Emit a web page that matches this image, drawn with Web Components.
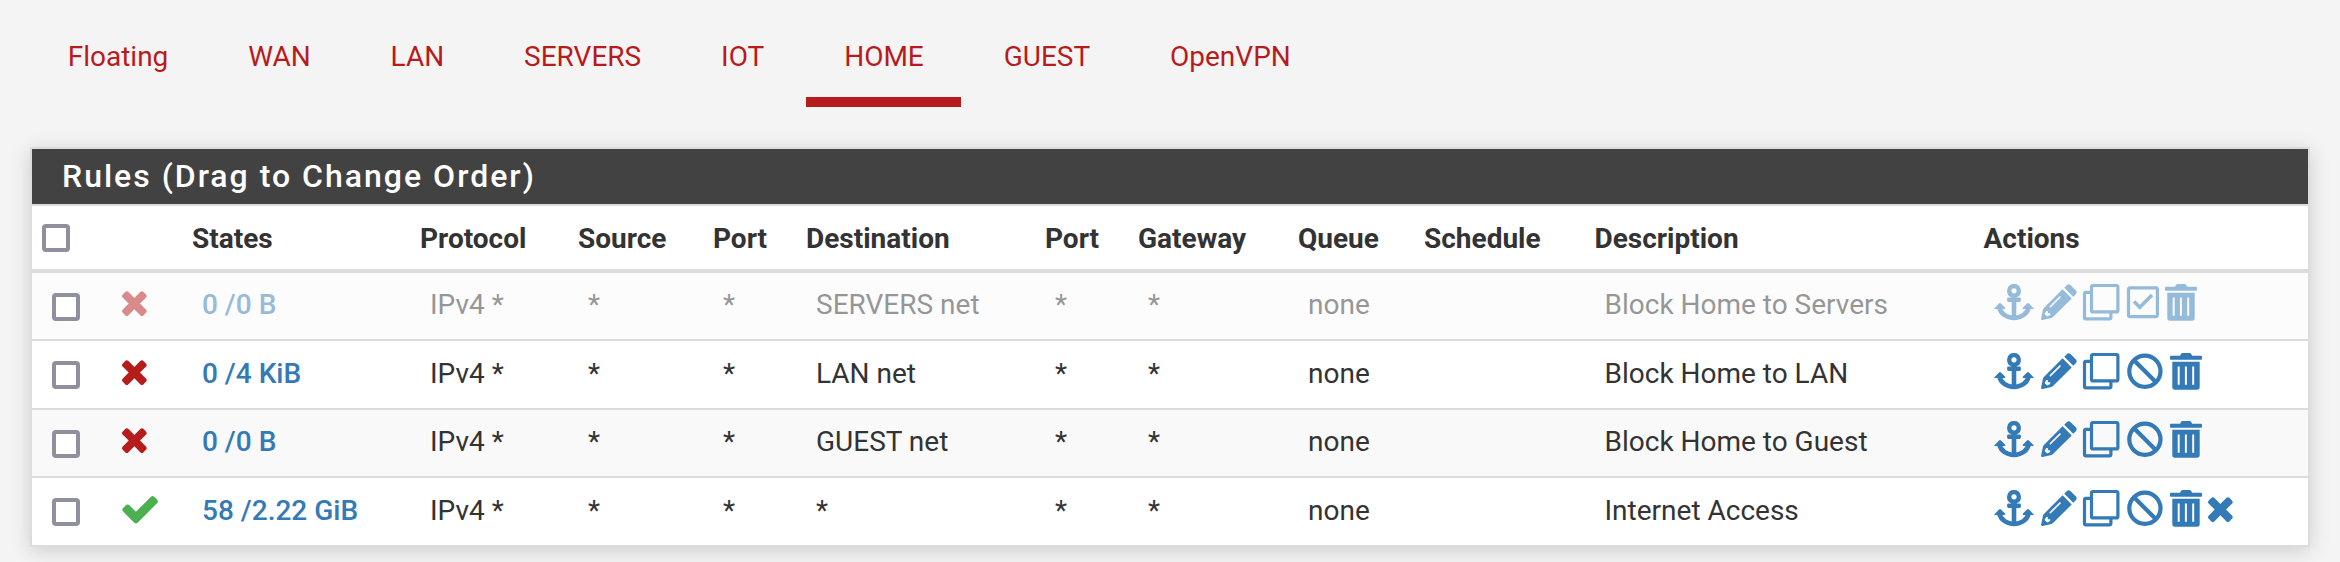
<!DOCTYPE html>
<html lang="en">
<head>
<meta charset="utf-8">
<title>Firewall: Rules: HOME</title>
<style>
  body {
    margin: 0;
    height: 562px;
    overflow: hidden;
    background: #f4f4f4;
    color: #333;
    font: 28px/42px Roboto, "Liberation Sans", sans-serif;
  }
</style>
</head>
<body>
<firewall-rules></firewall-rules>

<script>
const ICONS = {
  anchor: {
    width: 47.3,
    body: `<path fill-rule="evenodd" d="M20 0a6.9 6.9 0 0 1 2.3 13.4H25.5q1.4 0 1.4 1.4v1.7q0 1.4-1.4 1.4H22.3V34h-4.6V17.9H14.5q-1.4 0-1.4-1.4v-1.7q0-1.4 1.4-1.4H17.7A6.9 6.9 0 0 1 20 0zM20 4.2a2.6 2.6 0 1 0 0 5.2a2.6 2.6 0 0 0 0-5.2z"/>
      <path d="M5.2 23C8 37.6 32 37.6 34.8 23" fill="none" stroke="currentColor" stroke-width="4.6"/>
      <path d="M.5 24.2L5 19.4q1-.9 2 0l4 4q1 1.3-.5 1.5H1q-1.4 0-.5-.7zM39.5 24.2L35 19.4q-1-.9-2 0l-4 4q-1 1.3.5 1.5H39q1.4 0 .5-.7z"/>`,
  },
  pencil: {
    width: 42.7,
    body: `<path d="M23.3 3.8L26 1q1.6-1.5 3.4 0l5.6 5.6q1.6 1.7 0 3.4l-2.7 2.7z"/>
      <path fill-rule="evenodd" d="M21.6 5.3l9.1 9.1L12 33.1q-.7.7-1.6.9L1.6 36Q-.1 36.2.1 34.5L2 25.6q.2-.9.9-1.6zM18.6 12.2l-10 10q-.5 1.3 1 1.2l10.1-10q.4-1.5-1.1-1.2zM5.2 26.9l-1.6 3 2.6 2.7 3-1.5v-1.8H6.8v-2.4z"/>`,
  },
  clone: {
    width: 43.4,
    body: `<g fill="none" stroke="currentColor" stroke-width="3.2" stroke-linejoin="round">
      <rect x="8.5" y="1.5" width="26.4" height="26.4" rx="1.5"/>
      <path d="M7.5 8.3H3Q1.5 8.3 1.5 9.8V33.2Q1.5 34.8 3 34.8H26.3Q27.9 34.8 27.9 33.2V28.5"/></g>`,
  },
  ban: {
    width: 42.9,
    body: `<g fill="none" stroke="currentColor" stroke-width="4.2"><circle cx="17.9" cy="18.3" r="15.6"/><path d="M7 7.3l21.8 21.8"/></g>`,
  },
  enable: {
    width: 38.3,
    body: `<rect x="1.5" y="3.9" width="28.9" height="28.7" rx="1.8" fill="none" stroke="currentColor" stroke-width="3.2"/>
      <path d="M7 17.6l5.8 5.6L25 11" fill="none" stroke="currentColor" stroke-width="3.5"/>`,
  },
  trash: {
    width: 38.7,
    body: `<path d="M1 2.8H10L11 1q.6-1 1.8-1h6.6q1.2 0 1.8 1l1 1.8H31q1 0 1 1V5.7q0 1-1 1H1q-1 0-1-1V3.8q0-1 1-1z"/>
      <path fill-rule="evenodd" d="M2.3 8.8H29.7V34q0 2.7-2.7 2.7H5Q2.3 36.7 2.3 34zM7.7 13.6V31.8h2V13.6zM14.9 13.6V31.8h2V13.6zM22.2 13.6V31.8h2V13.6z"/>`,
  },
  times: {
    width: 25,
    body: `<path transform="translate(-6.3 -6.4) scale(.0208333)" d="M1490 1322q0 40-28 68l-136 136q-28 28-68 28t-68-28l-294-294-294 294q-28 28-68 28t-68-28l-136-136q-28-28-28-68t28-68l294-294-294-294q-28-28-28-68t28-68l136-136q28-28 68-28t68 28l294 294 294-294q28-28 68-28t68 28l136 136q28 28 28 68t-28 68l-294 294 294 294q28 28 28 68z"/>`,
  },
  check: {
    width: 36,
    body: `<path transform="translate(-2.5 -6.6) scale(.0230)" d="M1671 566q0 40-28 68l-724 724-136 136q-28 28-68 28t-68-28l-136-136-362-362q-28-28-28-68t28-68l136-136q28-28 68-28t68 28l294 295 656-657q28-28 68-28t68 28l136 136q28 28 28 68z"/>`,
  },
};

const RULES = [
  { disabled: true, state: 'times', states: '0 /0 B', destination: 'SERVERS net', description: 'Block Home to Servers', actions: 'anchor pencil clone enable trash' },
  { state: 'times', states: '0 /4 KiB', destination: 'LAN net', description: 'Block Home to LAN', actions: 'anchor pencil clone ban trash' },
  { state: 'times', states: '0 /0 B', destination: 'GUEST net', description: 'Block Home to Guest', actions: 'anchor pencil clone ban trash' },
  { state: 'check', states: '58 /2.22 GiB', destination: '*', description: 'Internet Access', actions: 'anchor pencil clone ban trash times' },
];

const COLUMNS = '70px 80px 228px 158px 135px 93px 239px 93px 160px 126px 170.5px 389px 1fr';

class RuleIcon extends HTMLElement {
  constructor() {
    super();
    this.attachShadow({ mode: 'open' });
  }

  connectedCallback() {
    const icon = ICONS[this.getAttribute('name')];
    this.shadowRoot.innerHTML = `
      <style>
        :host { display: block; flex: none; width: ${icon.width}px; height: 37px; }
        svg { display: block; overflow: visible; fill: currentColor; }
      </style>
      <svg width="${icon.width}" height="37" viewBox="0 0 ${icon.width} 37">${icon.body}</svg>`;
  }
}

class CheckBox extends HTMLElement {
  constructor() {
    super();
    this.attachShadow({ mode: 'open' }).innerHTML = `
      <style>
        :host {
          display: block;
          box-sizing: border-box;
          width: 28px;
          height: 28px;
          border: 4px solid #8f8f9d;
          border-radius: 4px;
          background: #fff;
        }
      </style>`;
  }
}

class NavTab extends HTMLElement {
  constructor() {
    super();
    this.attachShadow({ mode: 'open' }).innerHTML = `
      <style>
        :host {
          display: block;
          box-sizing: border-box;
          height: 107px;
          padding: 36px 37.7px 0;
          border-bottom: 10px solid transparent;
          color: #b71c1c;
          white-space: nowrap;
        }
        :host([active]) { border-bottom-color: #b71c1c; }
      </style>
      <slot></slot>`;
  }
}

class RulesHeader extends HTMLElement {
  constructor() {
    super();
    this.attachShadow({ mode: 'open' }).innerHTML = `
      <style>
        :host {
          display: grid;
          grid-template-columns: ${COLUMNS};
          box-sizing: border-box;
          height: 67px;
          border-bottom: 4px solid #dcdcdc;
          font-weight: 700;
        }
        span { padding: 12px 0 0 10px; white-space: nowrap; }
        check-box { margin: 18px 0 0 10px; }
      </style>
      <check-box></check-box><span></span>
      <span>States</span><span>Protocol</span><span>Source</span><span>Port</span>
      <span>Destination</span><span>Port</span><span>Gateway</span><span>Queue</span>
      <span>Schedule</span><span>Description</span><span>Actions</span>`;
  }
}

class RuleRow extends HTMLElement {
  constructor() {
    super();
    this.attachShadow({ mode: 'open' });
  }

  set rule(rule) {
    const actions = rule.actions.split(' ').map((name) => `<rule-icon name="${name}"></rule-icon>`).join('');
    this.toggleAttribute('disabled', !!rule.disabled);
    this.shadowRoot.innerHTML = `
      <style>
        :host {
          --top: 12px;
          display: grid;
          grid-template-columns: ${COLUMNS};
          box-sizing: border-box;
          height: 69px;
          border-bottom: 2px solid #dcdcdc;
          background: #fff;
        }
        :host(:nth-child(odd)) { --top: 11px; height: 68px; background: #f9f9f9; }
        :host([disabled]) { background: #fcfcfc !important; }
        :host(:last-child) { height: 67px; border-bottom: 0; }
        :host([disabled]) > :not(check-box) { opacity: .5; }
        div { padding: var(--top) 0 0 20px; white-space: nowrap; }
        check-box { margin: 20px 0 0 20px; }
        .state { padding-top: calc(var(--top) + 6px); color: #b71c1c; }
        .state.check { padding-top: 17px; color: #4caf50; }
        .link { color: #337ab7; font-weight: 500; }
        .actions { display: flex; padding-top: calc(var(--top) + .3px); color: #337ab7; }
        .actions [name="times"] { margin-top: 6px; }
      </style>
      <check-box></check-box>
      <div class="state ${rule.state}"><rule-icon name="${rule.state}"></rule-icon></div>
      <div class="link">${rule.states}</div>
      <div>IPv4 *</div><div>*</div><div>*</div>
      <div>${rule.destination}</div><div>*</div><div>*</div><div>none</div><div></div>
      <div>${rule.description}</div>
      <div class="actions">${actions}</div>`;
  }
}

class RulesPanel extends HTMLElement {
  constructor() {
    super();
    this.attachShadow({ mode: 'open' }).innerHTML = `
      <style>
        :host {
          display: block;
          margin: 40px 30px 0;
          border: 2px solid #dcdcdc;
          background: #fff;
          box-shadow: 0 4px 20px rgba(0, 0, 0, .16);
        }
        h2 {
          box-sizing: border-box;
          height: 57px;
          margin: 0;
          padding: 8px 30px 0;
          border-bottom: 2px solid #dcdcdc;
          background: #424242;
          background-clip: padding-box;
          color: #fff;
          font-size: 32px;
          font-weight: 500;
          line-height: 38px;
          letter-spacing: 2px;
        }
      </style>
      <h2><slot name="title"></slot></h2>
      <rules-header></rules-header>
      <div class="rows"></div>`;
    this.$rows = this.shadowRoot.querySelector('.rows');
  }

  connectedCallback() {
    RULES.forEach((rule) => {
      const row = document.createElement('rule-row');
      row.rule = rule;
      this.$rows.appendChild(row);
    });
  }
}

class FirewallRules extends HTMLElement {
  constructor() {
    super();
    this.attachShadow({ mode: 'open' }).innerHTML = `
      <style>
        :host { display: block; }
        nav { display: flex; gap: 4.5px; padding-left: 30px; }
      </style>
      <nav>
        <nav-tab>Floating</nav-tab>
        <nav-tab>WAN</nav-tab>
        <nav-tab>LAN</nav-tab>
        <nav-tab>SERVERS</nav-tab>
        <nav-tab>IOT</nav-tab>
        <nav-tab active>HOME</nav-tab>
        <nav-tab>GUEST</nav-tab>
        <nav-tab>OpenVPN</nav-tab>
      </nav>
      <rules-panel><span slot="title">Rules (Drag to Change Order)</span></rules-panel>`;
  }
}

customElements.define('rule-icon', RuleIcon);
customElements.define('check-box', CheckBox);
customElements.define('nav-tab', NavTab);
customElements.define('rules-header', RulesHeader);
customElements.define('rule-row', RuleRow);
customElements.define('rules-panel', RulesPanel);
customElements.define('firewall-rules', FirewallRules);
</script>
</body>
</html>
